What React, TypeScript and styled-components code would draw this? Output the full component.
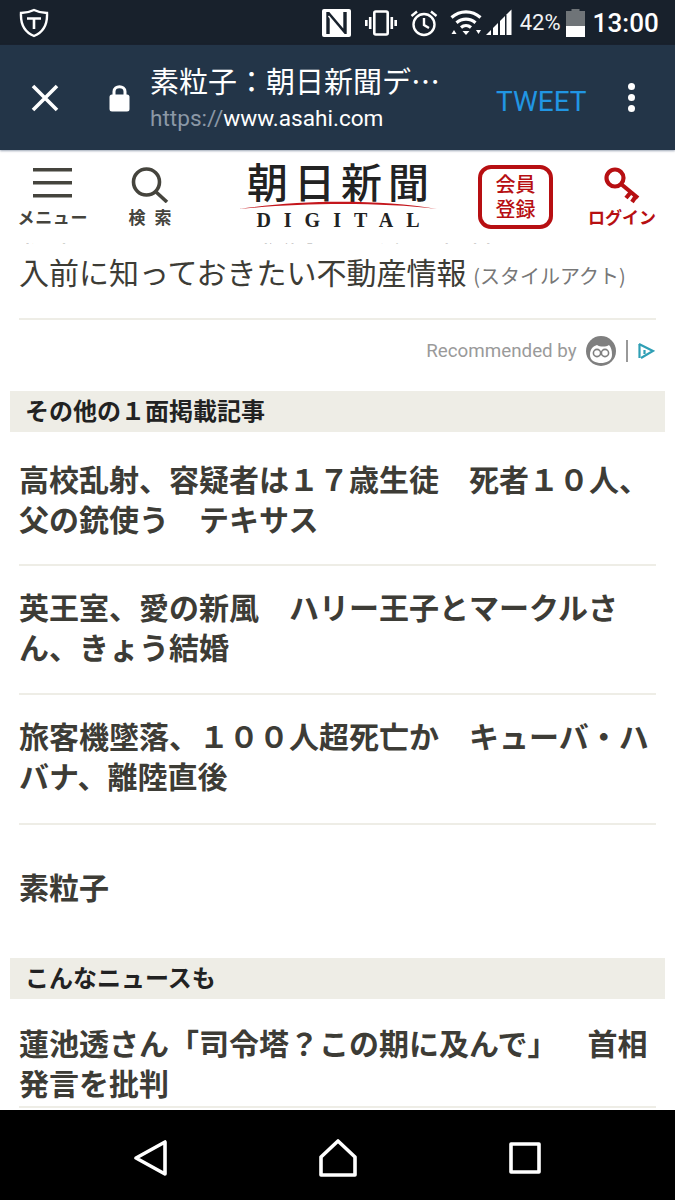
import styled, { createGlobalStyle } from 'styled-components';

const CJK = '"Noto Sans CJK JP", "Noto Sans", sans-serif';
const INK = '#3d3c36';
const RED = '#b70f12';
const RULE = '#eeede6';

const GlobalStyle = createGlobalStyle`
  html, body {
    margin: 0;
    padding: 0;
    background: #fff;
  }
  body {
    font-family: Roboto, ${CJK};
    overflow: hidden;
  }
`;

const Screen = styled.div`
  width: 675px;
  height: 1200px;
  display: flex;
  flex-direction: column;
  overflow: hidden;
`;

const StatusBar = styled.div`
  height: 45px;
  flex: none;
  background: #18212c;
  display: flex;
  align-items: center;
  padding: 0 16px 0 19px;
  color: #fff;
`;

const StatusIcons = styled.div`
  margin-left: auto;
  display: flex;
  align-items: center;
`;

const Battery = styled.span`
  font-size: 22px;
  margin: 0 5px 0 8px;
  color: #f2f3f4;
`;

const Clock = styled.span`
  font-size: 26px;
  font-weight: 500;
  margin-left: 8px;
  letter-spacing: 0.1px;
`;

const Toolbar = styled.div`
  height: 105px;
  flex: none;
  background: #233548;
  display: flex;
  align-items: center;
  box-shadow: 0 1px 2px rgba(60, 80, 110, 0.5);
  position: relative;
  z-index: 2;
`;

const CloseButton = styled.div`
  width: 90px;
  padding-left: 31px;
  box-sizing: border-box;
  display: flex;
`;

const LockSlot = styled.div`
  width: 60px;
  padding-left: 19px;
  box-sizing: border-box;
  display: flex;
`;

const TitleBlock = styled.div`
  width: 345px;
  display: flex;
  flex-direction: column;
  gap: 5px;
`;

const PageTitle = styled.div`
  font-family: ${CJK};
  font-size: 29px;
  line-height: 38px;
  color: #fff;
  white-space: nowrap;
`;

const PageUrl = styled.div`
  font-size: 22.6px;
  line-height: 30px;
  color: #fff;
  white-space: nowrap;
`;

const Scheme = styled.span`
  color: #8b98a6;
`;

const TweetLink = styled.div`
  font-size: 28px;
  color: #2196e3;
  width: 133px;
  padding: 8px 0 0 1px;
  box-sizing: border-box;
`;

const MenuDots = styled.div`
  display: flex;
  flex-direction: column;
  gap: 4px;
`;

const Dot = styled.span`
  width: 7px;
  height: 7px;
  border-radius: 50%;
  background: #fff;
`;

const SiteHeader = styled.div`
  height: 93px;
  flex: none;
  background: #fff;
  display: flex;
  position: relative;
  z-index: 1;
`;

const HeaderTool = styled.div<{ $width: number; $color?: string; $offset?: number }>`
  width: ${(p) => p.$width}px;
  margin-left: ${(p) => p.$offset ?? 0}px;
  display: flex;
  flex-direction: column;
  align-items: center;
  padding-top: 17px;
  box-sizing: border-box;
  color: ${(p) => p.$color ?? '#45443d'};
`;

const IconSlot = styled.div`
  height: 34px;
  display: flex;
  justify-content: center;
  align-items: flex-start;
`;

const ToolLabel = styled.div<{ $spacing?: number }>`
  font-family: ${CJK};
  font-size: 17px;
  font-weight: 700;
  line-height: 20px;
  margin-top: 6px;
  letter-spacing: ${(p) => p.$spacing ?? 0}px;
  margin-right: ${(p) => -(p.$spacing ?? 0)}px;
  white-space: nowrap;
`;

const Logo = styled.div`
  width: 198px;
  margin-left: 44px;
  display: flex;
  flex-direction: column;
  align-items: center;
  padding-top: 10px;
  box-sizing: border-box;
`;

const LogoTitle = styled.div`
  font-family: ${CJK};
  font-size: 41px;
  font-weight: 500;
  line-height: 40px;
  letter-spacing: 6px;
  margin-right: -6px;
  color: #222;
  white-space: nowrap;
`;

const LogoSwoosh = styled.svg`
  width: 198px;
  height: 10px;
  flex: none;
`;

const LogoLatin = styled.div`
  font-family: 'Liberation Serif', serif;
  font-weight: 700;
  font-size: 20px;
  line-height: 20px;
  letter-spacing: 13px;
  margin-right: -13px;
  color: #222;
  white-space: nowrap;
`;

const SignUp = styled.div`
  width: 75px;
  height: 64px;
  flex: none;
  margin: 15px 0 0 41px;
  box-sizing: border-box;
  border: 4px solid ${RED};
  border-radius: 13px;
  color: ${RED};
  font-family: ${CJK};
  font-weight: 500;
  font-size: 20px;
  line-height: 25px;
  text-align: center;
  padding-top: 2px;
`;

const Feed = styled.div`
  flex: 1;
  min-height: 0;
  overflow: hidden;
`;

// the list has scrolled under the site header, only the tail of the first line shows
const ScrolledContent = styled.div`
  margin-top: -38px;
  padding: 0 10px;
`;

const ArticleRow = styled.div`
  margin: 0 9px;
  font-family: ${CJK};
  font-size: 30px;
  line-height: 44px;
  color: ${INK};
  padding-bottom: 20px;
  border-bottom: 2px solid ${RULE};
  white-space: nowrap;
`;

const Source = styled.span`
  font-size: 20px;
  color: #777;
`;

const Recommended = styled.div`
  height: 71px;
  padding-bottom: 10px;
  box-sizing: border-box;
  display: flex;
  align-items: center;
  justify-content: flex-end;
  padding-right: 10px;
  font-size: 18.8px;
  color: #9a9a9a;
`;

const Divider = styled.span`
  width: 2px;
  height: 22px;
  background: #999;
  margin: 0 9px 0 10px;
`;

const SectionHead = styled.div`
  background: ${RULE};
  height: 41px;
  padding-left: 15px;
  font-family: ${CJK};
  font-size: 24px;
  font-weight: 700;
  line-height: 38px;
  color: #222;
`;

const Headline = styled.div<{ $top: number; $bottom: number; $bordered?: boolean }>`
  margin: 0 9px;
  padding: ${(p) => p.$top}px 0 ${(p) => p.$bottom}px;
  font-family: ${CJK};
  font-size: 30px;
  font-weight: 700;
  line-height: 40px;
  color: ${INK};
  border-bottom: ${(p) => (p.$bordered ? `2px solid ${RULE}` : 'none')};
`;

const NavBar = styled.div`
  height: 90px;
  flex: none;
  box-sizing: border-box;
  padding-top: 6px;
  background: #000;
  display: flex;
  justify-content: center;
  align-items: center;
`;

const NavSlot = styled.div`
  width: 187px;
  display: flex;
  justify-content: center;
`;

const ShieldIcon = () => (
  <svg width="30" height="30" viewBox="0 0 30 30" fill="none" stroke="#fff" strokeWidth="2.4">
    <path d="M15 2 C19 4 24 5 28 5 C28.5 15 25 24 15 28 C5 24 1.5 15 2 5 C6 5 11 4 15 2 Z" />
    <path d="M8 10.5 H22 M15 10.5 V21" strokeWidth="2.6" />
  </svg>
);

const NfcIcon = () => (
  <svg width="29" height="28" viewBox="0 0 29 28">
    <rect x="0" y="0" width="29" height="28" rx="2" fill="#fff" />
    <path d="M6 3 V25 M6 4 L23 24 M23 3 V25" fill="none" stroke="#18212c" strokeWidth="3.4" />
    <path d="M6.5 7 L22.5 26" fill="none" stroke="#fff" strokeWidth="1.4" />
  </svg>
);

const VibrateIcon = () => (
  <svg width="32" height="26" viewBox="0 0 32 26" fill="none" stroke="#fff" strokeWidth="2.6" style={{ marginLeft: 14 }}>
    <rect x="9.3" y="1.5" width="13.4" height="23" rx="1.5" />
    <path d="M5.2 7 V19 M1.3 10 V16 M26.8 7 V19 M30.7 10 V16" />
  </svg>
);

const AlarmIcon = () => (
  <svg width="28" height="28" viewBox="0 0 28 28" fill="none" stroke="#fff" strokeWidth="2.4" style={{ marginLeft: 13 }}>
    <circle cx="14" cy="15.5" r="10.5" />
    <path d="M14 9 V16 L19 19" />
    <path d="M1.5 7 L7 2.5 M26.5 7 L21 2.5" />
  </svg>
);

const WifiIcon = () => (
  <svg width="32" height="26" viewBox="0 0 32 26" fill="none" stroke="#fff" strokeWidth="3.2" style={{ marginLeft: 12 }}>
    <path d="M1.5 7.5 C10 0 22 0 30.5 7.5" />
    <path d="M6.5 12.8 C12 8 20 8 25.5 12.8" />
    <path d="M11 17.5 C14 15 18 15 21 17.5" />
    <path d="M12.5 21 H19.5 L16 25 Z M1.5 24 L4 20 L6.5 24 Z" fill="#fff" stroke="none" />
    <path d="M26 20 H31 L28.5 24 Z" fill="#fff" stroke="none" />
  </svg>
);

const SignalIcon = () => (
  <svg width="26" height="27" viewBox="0 0 26 27" fill="#fff" style={{ marginLeft: 4 }}>
    <path d="M0 26 L5 21 V26 Z" />
    <path d="M7 26 V19 L12 14 V26 Z" />
    <path d="M14 26 V12 L19 7 V26 Z" />
    <path d="M20.5 26 V5.5 L25.5 0.5 V26 Z" />
  </svg>
);

const BatteryIcon = () => (
  <svg width="19" height="28" viewBox="0 0 19 28">
    <rect x="5.5" y="0" width="8" height="3" fill="#6f7478" />
    <rect x="0" y="2" width="19" height="16" fill="#6f7478" />
    <rect x="0" y="17" width="19" height="11" fill="#fff" />
  </svg>
);

const CloseIcon = () => (
  <svg width="28" height="28" viewBox="0 0 28 28" stroke="#fff" strokeWidth="3.6">
    <path d="M2 2 L26 26 M26 2 L2 26" />
  </svg>
);

const LockIcon = () => (
  <svg width="21" height="28" viewBox="0 0 21 28">
    <path d="M5 11 V7.5 C5 1 16 1 16 7.5 V11" fill="none" stroke="#fff" strokeWidth="3" />
    <rect x="0.5" y="10.5" width="20" height="17" rx="2.5" fill="#fff" />
  </svg>
);

const MenuIcon = () => (
  <svg width="39" height="31" viewBox="0 0 39 31" fill="#45443d">
    <rect x="0" y="1" width="39" height="3.5" />
    <rect x="0" y="14" width="39" height="3.5" />
    <rect x="0" y="27" width="39" height="3.5" />
  </svg>
);

const SearchIcon = () => (
  <svg width="38" height="36" viewBox="0 0 38 36" fill="none" stroke="#45443d" strokeWidth="3.6">
    <circle cx="15.5" cy="15" r="13" />
    <path d="M24.5 24.5 L36 35" />
  </svg>
);

const KeyIcon = () => (
  <svg width="36" height="38" viewBox="0 0 36 38" fill="none" stroke={RED} strokeWidth="4.2">
    <circle cx="11" cy="11" r="8.5" />
    <path d="M17 17 L34 31" />
    <path d="M27 25 L22 31 M32 29 L28 35" />
  </svg>
);

const RoundLogo = () => (
  <svg width="30" height="30" viewBox="0 0 30 30">
    <circle cx="15" cy="15" r="15" fill="#7f7f7f" />
    <path d="M4 19 C4 12 8 10 11 9 C14 11 20 11 23 9 C25 11 26 14 26 19 C26 25 20 27 15 27 C10 27 4 25 4 19 Z" fill="#fff" />
    <circle cx="11" cy="17" r="3.6" fill="none" stroke="#7f7f7f" strokeWidth="1.6" />
    <circle cx="19" cy="17" r="3.6" fill="none" stroke="#7f7f7f" strokeWidth="1.6" />
  </svg>
);

const PlayLogo = () => (
  <svg width="18" height="18" viewBox="0 0 18 18" fill="none" stroke="#2f9fb5" strokeWidth="2.2">
    <path d="M2 2 L16 9 L4 16" />
    <path d="M2.5 2 V16" />
    <path d="M7.5 8 V12" />
  </svg>
);

const BackIcon = () => (
  <svg width="34" height="36" viewBox="0 0 34 36" fill="none" stroke="#fff" strokeWidth="3.6" strokeLinejoin="round">
    <path d="M31 2 V34 L2 18 Z" />
  </svg>
);

const HomeIcon = () => (
  <svg width="38" height="38" viewBox="0 0 38 38" fill="none" stroke="#fff" strokeWidth="3.6" strokeLinejoin="round">
    <path d="M2 18 L19 2 L36 18 V36 H2 Z" />
  </svg>
);

const SquareIcon = () => (
  <svg width="32" height="32" viewBox="0 0 32 32" fill="none" stroke="#fff" strokeWidth="3.6" strokeLinejoin="round">
    <rect x="2" y="2" width="28" height="28" />
  </svg>
);

const App = () => (
  <Screen>
    <GlobalStyle />
    <StatusBar>
      <ShieldIcon />
      <StatusIcons>
        <NfcIcon />
        <VibrateIcon />
        <AlarmIcon />
        <WifiIcon />
        <SignalIcon />
        <Battery>42%</Battery>
        <BatteryIcon />
        <Clock>13:00</Clock>
      </StatusIcons>
    </StatusBar>
    <Toolbar>
      <CloseButton>
        <CloseIcon />
      </CloseButton>
      <LockSlot>
        <LockIcon />
      </LockSlot>
      <TitleBlock>
        <PageTitle>素粒子：朝日新聞デ…</PageTitle>
        <PageUrl>
          <Scheme>https://</Scheme>www.asahi.com
        </PageUrl>
      </TitleBlock>
      <TweetLink>TWEET</TweetLink>
      <MenuDots>
        <Dot />
        <Dot />
        <Dot />
      </MenuDots>
    </Toolbar>
    <SiteHeader>
      <HeaderTool $width={105}>
        <IconSlot>
          <MenuIcon />
        </IconSlot>
        <ToolLabel $spacing={0.6}>メニュー</ToolLabel>
      </HeaderTool>
      <HeaderTool $width={90}>
        <IconSlot>
          <SearchIcon />
        </IconSlot>
        <ToolLabel $spacing={9}>検索</ToolLabel>
      </HeaderTool>
      <Logo>
        <LogoTitle>朝日新聞</LogoTitle>
        <LogoSwoosh viewBox="0 0 198 10">
          <path d="M0 9 C60 0 140 -1 198 9 C140 2 60 3 0 9 Z" fill="#c4161c" />
        </LogoSwoosh>
        <LogoLatin>DIGITAL</LogoLatin>
      </Logo>
      <SignUp>
        会員
        <br />
        登録
      </SignUp>
      <HeaderTool $width={84} $offset={27} $color={RED}>
        <IconSlot>
          <KeyIcon />
        </IconSlot>
        <ToolLabel>ログイン</ToolLabel>
      </HeaderTool>
    </SiteHeader>
    <Feed>
      <ScrolledContent>
        <ArticleRow>
          新築マンションを検討する方が物件の購
          <br />
          入前に知っておきたい不動産情報 <Source>(スタイルアクト)</Source>
        </ArticleRow>
        <Recommended>
          Recommended by&nbsp;&nbsp;
          <RoundLogo />
          <Divider />
          <PlayLogo />
        </Recommended>
        <SectionHead>その他の１面掲載記事</SectionHead>
        <Headline $top={26} $bottom={26} $bordered>
          高校乱射、容疑者は１７歳生徒　死者１０人、父の銃使う　テキサス
        </Headline>
        <Headline $top={20} $bottom={27} $bordered>
          英王室、愛の新風　ハリー王子とマークルさん、きょう結婚
        </Headline>
        <Headline $top={20} $bottom={28} $bordered>
          旅客機墜落、１００人超死亡か　キューバ・ハバナ、離陸直後
        </Headline>
        <Headline $top={41} $bottom={52}>素粒子</Headline>
        <SectionHead>こんなニュースも</SectionHead>
        <Headline $top={23} $bottom={4} $bordered>
          蓮池透さん「司令塔？この期に及んで」　&ensp;首相発言を批判
        </Headline>
      </ScrolledContent>
    </Feed>
    <NavBar>
      <NavSlot>
        <BackIcon />
      </NavSlot>
      <NavSlot>
        <HomeIcon />
      </NavSlot>
      <NavSlot>
        <SquareIcon />
      </NavSlot>
    </NavBar>
  </Screen>
);

export default App;
